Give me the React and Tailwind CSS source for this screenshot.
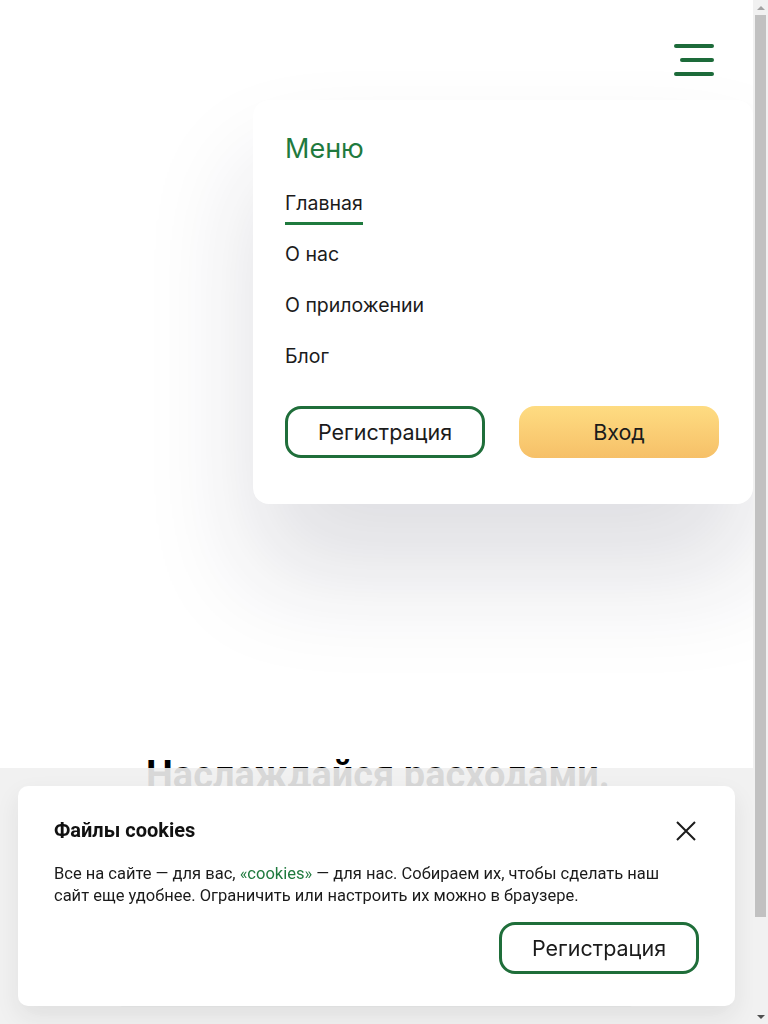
import React from "react";

const menuFont = { fontFamily: "Inter, 'Noto Sans', Roboto, sans-serif" };

export default function App() {
  return (
    <div className="relative min-h-[1130px] bg-white">
      <div className="relative mr-[15px] min-h-[1130px]" style={menuFont}>
        {/* header */}
        <header className="flex justify-end pr-[39px] pt-[44px]">
          <button className="flex w-[40px] flex-col items-end gap-[10px]">
            <span className="block h-[4px] w-[40px] rounded-full bg-[#1d6b3a]" />
            <span className="block h-[4px] w-[34px] rounded-full bg-[#1d6b3a]" />
            <span className="block h-[4px] w-[40px] rounded-full bg-[#1d6b3a]" />
          </button>
        </header>

        {/* dropdown menu */}
        <div className="absolute right-0 top-[100px] w-[500px] rounded-[16px] bg-white pb-[46px] pl-[32px] pr-[34px] pt-[32px] shadow-[0_70px_110px_rgba(30,30,60,0.14)]">
          <div className="text-[27px] leading-[34px] text-[#1f7a3e]">Меню</div>
          <nav className="mt-[25px] flex flex-col items-start text-[19.5px] leading-[24px] text-[#1b1b1b]">
            <a className="border-b-[3px] border-[#1f7a3e] pb-[7px]">Главная</a>
            <a className="mt-[17px]">О нас</a>
            <a className="mt-[27px]">О приложении</a>
            <a className="mt-[27px]">Блог</a>
          </nav>
          <div className="mt-[38px] flex justify-between">
            <button className="h-[52px] w-[200px] rounded-[16px] border-[3px] border-[#1f6e3a] text-[21.5px] text-[#1b1b1b]">Регистрация</button>
            <button className="h-[52px] w-[200px] rounded-[16px] bg-gradient-to-b from-[#fedc82] to-[#f6c068] text-[21.5px] text-[#1b1b1b]">Вход</button>
          </div>
        </div>

        {/* page content */}
        <section className="pl-[146px] pt-[677px]" style={{ fontFamily: "Roboto, sans-serif" }}>
          <h1 className="text-[38px] font-bold leading-[44px] text-black">Наслаждайся расходами.</h1>
          <div className="ml-[-26px] mt-[206px] h-[4px] w-[512px] rounded bg-[#c8d6d6]" />
        </section>
      </div>

      {/* cookie overlay */}
      <div className="fixed bottom-0 left-0 right-[15px] h-[256px] bg-[rgba(240,240,240,0.9)] px-[18px] pt-[18px]" style={{ fontFamily: "Roboto, sans-serif" }}>
        <div className="relative h-[220px] rounded-[10px] bg-white px-[36px] pt-[31px] shadow-[0_10px_24px_rgba(0,0,0,0.08)]">
          <div className="text-[20px] font-bold leading-[26px] text-[#111]">Файлы cookies</div>
          <button className="absolute right-[39px] top-[35px]">
            <svg width="20" height="20" viewBox="0 0 20 20" fill="none" stroke="#1b1b1b" strokeWidth="2">
              <path d="M1 1L19 19M19 1L1 19" />
            </svg>
          </button>
          <p className="mt-[20px] text-[16.5px] leading-[22px] text-[#1b1b1b]">
            Все на сайте — для вас, <span className="text-[#1f7a3e]">«cookies»</span> — для нас. Собираем их, чтобы сделать наш
            <br />
            сайт еще удобнее. Ограничить или настроить их можно в браузере.
          </p>
          <div className="mt-[15px] flex justify-end">
            <button className="h-[52px] w-[200px] rounded-[16px] border-[3px] border-[#1f6e3a] text-[21.5px] text-[#1b1b1b]" style={menuFont}>
              Регистрация
            </button>
          </div>
        </div>
      </div>

      {/* scrollbar */}
      <div className="fixed bottom-0 right-0 top-0 flex w-[15px] flex-col items-center bg-[#f1f1f1]">
        <div className="flex h-[15px] w-full items-center justify-center">
          <div className="h-0 w-0 border-x-[4px] border-b-[4px] border-x-transparent border-b-[#a3a3a3]" />
        </div>
        <div className="h-[902px] w-[11px] bg-[#c1c1c1]" />
        <div className="flex-1" />
        <div className="flex h-[15px] w-full items-center justify-center">
          <div className="h-0 w-0 border-x-[4px] border-t-[4px] border-x-transparent border-t-[#505050]" />
        </div>
      </div>
    </div>
  );
}
